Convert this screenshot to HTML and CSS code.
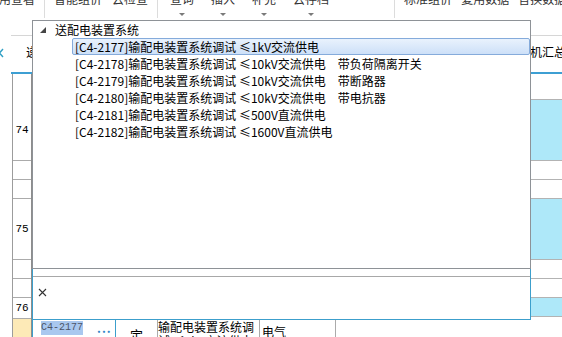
FILE: index.html
```html
<!DOCTYPE html>
<html>
    <head>
        <meta charset="utf-8">
        <title>定额选择</title>
        <link rel="stylesheet" href="styles.css">
    </head>
    <body>
        <!-- Ribbon toolbar (top cut off) -->
        <div class="toolbar">
            <div class="group group-first">
                <div class="tool">费用查看</div>
            </div>
            <div class="sep"></div>
            <div class="group">
                <div class="tool">智能组价</div>
                <div class="tool">云检查</div>
            </div>
            <div class="sep"></div>
            <div class="group group-drop">
                <div class="tool">查询<span class="caret"></span></div>
                <div class="tool">插入<span class="caret"></span></div>
                <div class="tool">补充<span class="caret"></span></div>
                <div class="tool">云存档<span class="caret"></span></div>
            </div>
            <div class="sep"></div>
            <div class="group group-last">
                <div class="tool">标准组价</div>
                <div class="tool">复用数据</div>
                <div class="tool">替换数据</div>
            </div>
        </div>

        <!-- Tabs -->
        <div class="header">
            <div class="nav">
                <svg width="6" height="10" viewBox="0 0 6 10"><polyline points="4,1 0.5,5 4,9" fill="none" stroke="#2f9fc4" stroke-width="1.4"/></svg>
            </div>
            <div class="tabs">
                <div class="tab">递延费用</div>
                <div class="tab">人材机汇总</div>
            </div>
        </div>

        <!-- Grid -->
        <div class="grid">
            <div class="gutter"></div>
            <div class="rownums">
                <div class="num r-head"></div>
                <div class="num r-main">74</div>
                <div class="num r-sub"></div>
                <div class="num r-sub"></div>
                <div class="num r-main">75</div>
                <div class="num r-sub"></div>
                <div class="num r-sub"></div>
                <div class="num r-end">76</div>
                <div class="num num-current"></div>
            </div>
            <div class="body">
                <div class="body-fill"></div>
                <div class="data-row">
                    <div class="c c-code"><span class="sel">C4-2177</span><span class="more">...</span></div>
                    <div class="c c-type">定</div>
                    <div class="c c-name">输配电装置系统调试 ≤1kV交流供电</div>
                    <div class="c c-unit">电气</div>
                    <div class="c c-rest"></div>
                </div>
            </div>
            <div class="side">
                <div class="cell r-head"></div>
                <div class="cell blue r-main"></div>
                <div class="cell r-sub"></div>
                <div class="cell r-sub"></div>
                <div class="cell blue r-main"></div>
                <div class="cell r-sub"></div>
                <div class="cell r-sub"></div>
                <div class="cell blue r-sub"></div>
            </div>
        </div>

        <!-- Quota dropdown -->
        <div class="dropdown">
            <div class="tree">
                <div class="tree-root">
                    <svg width="6" height="6" viewBox="0 0 6 6"><polygon points="6,0 6,6 0,6" fill="#454545"/></svg>
                    <span>送配电装置系统</span>
                </div>
                <div class="tree-item active">[C4-2177]输配电装置系统调试 ≤1kV交流供电</div>
                <div class="tree-item">[C4-2178]输配电装置系统调试 ≤10kV交流供电　带负荷隔离开关</div>
                <div class="tree-item">[C4-2179]输配电装置系统调试 ≤10kV交流供电　带断路器</div>
                <div class="tree-item">[C4-2180]输配电装置系统调试 ≤10kV交流供电　带电抗器</div>
                <div class="tree-item">[C4-2181]输配电装置系统调试 ≤500V直流供电</div>
                <div class="tree-item">[C4-2182]输配电装置系统调试 ≤1600V直流供电</div>
            </div>
            <div class="editor">
                <div class="editor-body">
                    <svg width="9" height="9" viewBox="0 0 9 9"><path d="M1 1 L8 8 M8 1 L1 8" stroke="#333" stroke-width="1.1"/></svg>
                </div>
            </div>
        </div>
    </body>
</html>
```

FILE: styles.css
```css
*{
    box-sizing: border-box;
}
body{
    margin: 0;
    width: 562px;
    height: 337px;
    overflow: hidden;
    position: relative;
    background-color: #fff;
    font-family: "Noto Sans CJK SC", sans-serif;
    font-size: 12px;
    color: #000;
}

/* toolbar */
.toolbar{
    display: flex;
    align-items: flex-start;
    height: 20px;
    overflow: hidden;
    color: #333;
}
.group{
    display: flex;
    gap: 10px;
    flex-shrink: 0;
}
.group-first{
    margin-left: -13px;
}
.group-drop{
    gap: 17px;
    margin-left: 3px;
    margin-right: 56px;
}
.group-last{
    gap: 9px;
}
.tool{
    margin-top: -8px;
    line-height: 14px;
    white-space: nowrap;
    flex-shrink: 0;
}
.caret{
    display: block;
    width: 0;
    height: 0;
    margin: 7px auto 0;
    border-left: 3px solid transparent;
    border-right: 3px solid transparent;
    border-top: 3px solid #7a7a7a;
}
.sep{
    width: 1px;
    height: 18px;
    margin: 0 9px;
    background-color: #dcdcdc;
    flex-shrink: 0;
}

/* tabs */
.header{
    display: flex;
    height: 54px;
}
.nav{
    width: 12px;
    padding-top: 24px;
    margin-left: -1px;
}
.tabs{
    flex: 1;
    height: 39px;
    margin-top: 15px;
    padding-left: 15px;
    border-top: 1px solid #d6d6d6;
    border-bottom: 2px solid #3d9fd3;
    display: grid;
    grid-template-columns: 480px auto;
    overflow: hidden;
    white-space: nowrap;
}
.tab{
    padding-top: 9px;
    line-height: 14px;
}

/* grid */
.grid{
    display: flex;
    height: 263px;
}
.gutter{
    width: 13px;
    border-right: 1px solid #9c9c9c;
}
.rownums{
    width: 19px;
    display: flex;
    flex-direction: column;
    border-right: 1px solid #8d8d8d;
    font-family: "Liberation Mono", monospace;
    font-size: 11px;
}
.num{
    display: flex;
    align-items: center;
    justify-content: center;
    flex-shrink: 0;
    border-bottom: 1px solid #ababab;
}
.num-current{
    flex: 1;
    border-bottom: none;
    background-color: #fdeab7;
}
.r-head{
    height: 26px;
    border-bottom: none;
}
.r-main{
    height: 61px;
}
.r-sub{
    height: 19px;
}
.r-end{
    height: 21px;
}
.body{
    flex: 1;
    display: flex;
    flex-direction: column;
    overflow: hidden;
}
.body-fill{
    height: 245px;
    flex-shrink: 0;
}
.data-row{
    display: flex;
    height: 30px;
    flex-shrink: 0;
    border-top: 1px solid #3c9fcc;
}
.c{
    border-right: 1px solid #ababab;
    line-height: 14px;
    flex-shrink: 0;
}
.c-code{
    width: 84px;
    display: flex;
    align-items: flex-start;
    padding: 1px 0 0 8px;
    border-left: 1px solid #3c9fcc;
    border-right-color: #3c9fcc;
}
.sel{
    font-family: "Liberation Mono", monospace;
    font-size: 10px;
    color: #4b5568;
    background-color: #a9c8ef;
}
.more{
    margin-left: 14px;
    font-weight: bold;
    letter-spacing: 1px;
    color: #2f86c8;
}
.c-type{
    width: 42px;
    padding-top: 8px;
    text-align: center;
    font-size: 13px;
}
.c-name{
    width: 102px;
}
.c-unit{
    width: 76px;
    padding: 5px 0 0 2px;
}
.c-rest{
    flex: 1;
    border-right: none;
}
.side{
    width: 31px;
    display: flex;
    flex-direction: column;
}
.cell{
    flex-shrink: 0;
    border-bottom: 1px solid #b3b3b3;
}
.blue{
    background-color: #aee8f9;
}

/* dropdown */
.dropdown{
    position: absolute;
    left: 32px;
    top: 20px;
    width: 499px;
}
.tree{
    height: 249px;
    border: 1px solid #8e9297;
    background-color: #fff;
}
.tree-root{
    display: flex;
    align-items: center;
    height: 17px;
    padding-left: 7px;
}
.tree-root span{
    margin-left: 9px;
}
.tree-item{
    height: 17px;
    line-height: 15px;
    margin-left: 39px;
    padding-left: 2px;
    border: 1px solid transparent;
    white-space: nowrap;
}
.tree-item.active{
    border-color: #85abdb;
    border-radius: 2px;
    background: linear-gradient(#e9f2fd, #cde0f8);
}
.editor{
    height: 51px;
    padding-top: 7px;
    border: 1px solid #3c9fcc;
    border-top: none;
    background-color: #fff;
}
.editor-body{
    height: 100%;
    padding: 11px 0 0 5px;
    border-top: 1px solid #a8a8a8;
}
.editor-body svg{
    display: block;
}
```
